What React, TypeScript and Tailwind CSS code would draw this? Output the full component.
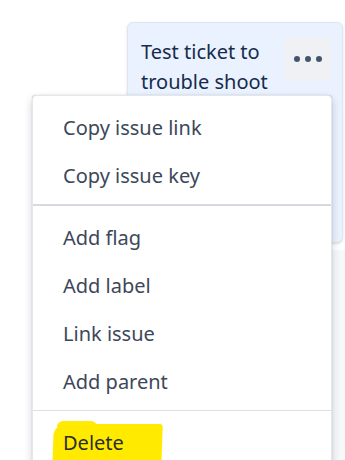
import React from 'react';

const groups: string[][] = [
  ['Copy issue link', 'Copy issue key'],
  ['Add flag', 'Add label', 'Link issue', 'Add parent'],
  ['Delete'],
];

const MenuItem: React.FC<{ label: string; highlight?: boolean }> = ({ label, highlight }) => (
  <div className="h-12 flex items-center pl-[30px]">
    <span className="relative">
      {highlight && (
        <>
          <span className="absolute -left-[10px] -right-[38px] top-[-4px] bottom-[-12px] bg-[#ffea00] rounded-tl-[12px] rounded-tr-[3px] rounded-bl-[8px] rounded-br-[2px] -skew-x-2" />
          <span className="absolute left-[-6px] w-[40px] top-[-7px] h-[6px] bg-[#ffea00] rounded-t-full" />
        </>
      )}
      <span className={highlight ? 'relative text-[#2a2f26]' : 'relative'}>{label}</span>
    </span>
  </div>
);

export default function App() {
  return (
    <div
      className="relative w-[345px] h-[460px] overflow-hidden bg-white"
      style={{ fontFamily: '"Noto Sans", "Open Sans", Arial, sans-serif' }}
    >
      {/* card behind the menu */}
      <div className="absolute left-[127px] top-[22px] w-[216px] h-[221px] rounded-md bg-[#e9f2fe] border border-[#dfe6f0] shadow-sm">
        <div className="flex justify-between pl-[13px] pt-[14px] pr-[11px]">
          <p className="text-[20px] leading-[30px] text-[#172b4d]">
            Test ticket to
            <br />
            trouble shoot
          </p>
          <div className="w-[47px] h-[44px] mt-[0px] rounded bg-[#eff1f4] flex items-center justify-center gap-[5px]">
            <span className="w-[6px] h-[6px] rounded-full bg-[#44546f]" />
            <span className="w-[6px] h-[6px] rounded-full bg-[#44546f]" />
            <span className="w-[6px] h-[6px] rounded-full bg-[#44546f]" />
          </div>
        </div>
      </div>
      <div className="absolute left-[332px] top-[250px] w-[20px] h-[220px] bg-[#f7f8f9]" />

      {/* dropdown menu */}
      <div className="absolute left-[32px] top-[95px] w-[300px] h-[400px] bg-white rounded border border-[#e4e6ea] shadow-[0_4px_8px_rgba(9,30,66,0.2),0_0_1px_rgba(9,30,66,0.3)] text-[20px] text-[#3d4759]">
        {groups.map((g, gi) => (
          <div
            key={gi}
            className={
              gi === 0
                ? 'pt-2 pb-1 border-b-2 border-[#d6d9de]'
                : gi === 1
                ? 'pt-2 pb-1 border-b border-[#dcdfe4]'
                : 'pt-2'
            }
          >
            {g.map((label) => (
              <MenuItem key={label} label={label} highlight={label === 'Delete'} />
            ))}
          </div>
        ))}
      </div>
    </div>
  );
}
